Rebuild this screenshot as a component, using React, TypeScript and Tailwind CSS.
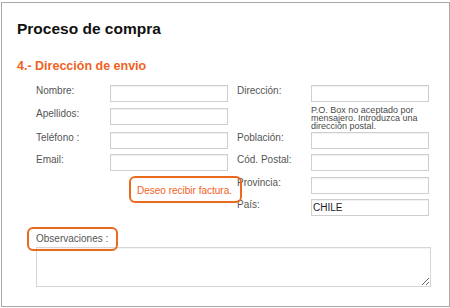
import React from "react";

const Label = ({ children }: { children: React.ReactNode }) => (
  <div className="w-[74px] shrink-0 text-[10px] leading-[12px] text-[#555555]">{children}</div>
);

const Input = ({ value }: { value?: string }) => (
  <div className="w-[118px] h-[17px] shrink-0 border border-[#cfcfcf] bg-white shadow-[inset_0_1px_1px_rgba(0,0,0,0.06)] px-[1px] text-[10px] leading-[15px] text-[#1b1b2b]">
    {value}
  </div>
);

const Gap = () => <div className="w-[9px] shrink-0" />;

export default function App() {
  return (
    <div className="w-[450px] h-[308px] bg-white" style={{ fontFamily: '"Liberation Sans", Arial, sans-serif' }}>
      <div className="ml-[1px] mt-[2px] w-[449px] h-[305px] border border-[#a9a9a9] bg-white pl-[15px] pt-[17px] relative">
        <h1 className="text-[15.5px] leading-[18px] font-bold text-[#111111]">Proceso de compra</h1>
        <h2 className="mt-[21px] text-[12.5px] leading-[15px] font-bold text-[#f0621e]">4.- Dirección de envio</h2>

        <div className="ml-[19px] flex flex-col">
          <div className="mt-[11px] flex items-start h-[17px]">
            <Label>Nombre:</Label>
            <Input />
            <Gap />
            <Label>Dirección:</Label>
            <Input />
          </div>
          <div className="mt-[6px] flex items-start h-[17px]">
            <Label>Apellidos:</Label>
            <Input />
            <Gap />
            <div className="w-[74px] shrink-0" />
            <div className="w-[118px] -mt-[2px] text-[9px] leading-[8px] text-[#4a4a4a]">
              P.O. Box no aceptado por<br />mensajero. Introduzca una<br />dirección postal.
            </div>
          </div>
          <div className="mt-[7px] flex items-start h-[17px]">
            <Label>Teléfono :</Label>
            <Input />
            <Gap />
            <Label>Población:</Label>
            <Input />
          </div>
          <div className="mt-[5px] flex items-start h-[17px]">
            <Label>Email:</Label>
            <Input />
            <Gap />
            <Label>Cód. Postal:</Label>
            <Input />
          </div>
          <div className="mt-[6px] flex items-start h-[17px]">
            <div className="w-[74px] shrink-0" />
            <div className="w-[118px] shrink-0 pl-[27px]">
              <span className="relative inline-block text-[10px] leading-[12px] text-[#f0621e] whitespace-nowrap">
                Deseo recibir factura.
                <span className="absolute left-[-8px] right-[-10px] top-[-9px] bottom-[-6px] border-2 border-[#ec6a1f] rounded-[6px]" />
              </span>
            </div>
            <Gap />
            <Label>Provincia:</Label>
            <Input />
          </div>
          <div className="mt-[5px] flex items-start h-[17px]">
            <div className="w-[74px] shrink-0" />
            <div className="w-[118px] shrink-0" />
            <Gap />
            <Label>País:</Label>
            <Input value="CHILE" />
          </div>

          <div className="mt-[17px] flex">
            <span className="relative inline-block text-[10px] leading-[12px] text-[#555555]">
              Observaciones :
              <span className="absolute left-[-9px] right-[-10px] top-[-6px] bottom-[-6px] border-2 border-[#ec6a1f] rounded-[6px]" />
            </span>
          </div>
          <textarea
            className="mt-[2px] block w-[395px] h-[40px] border border-[#d6d6d6] shadow-[inset_0_1px_1px_rgba(0,0,0,0.05)] outline-none"
            defaultValue=""
          />
        </div>
      </div>
    </div>
  );
}
